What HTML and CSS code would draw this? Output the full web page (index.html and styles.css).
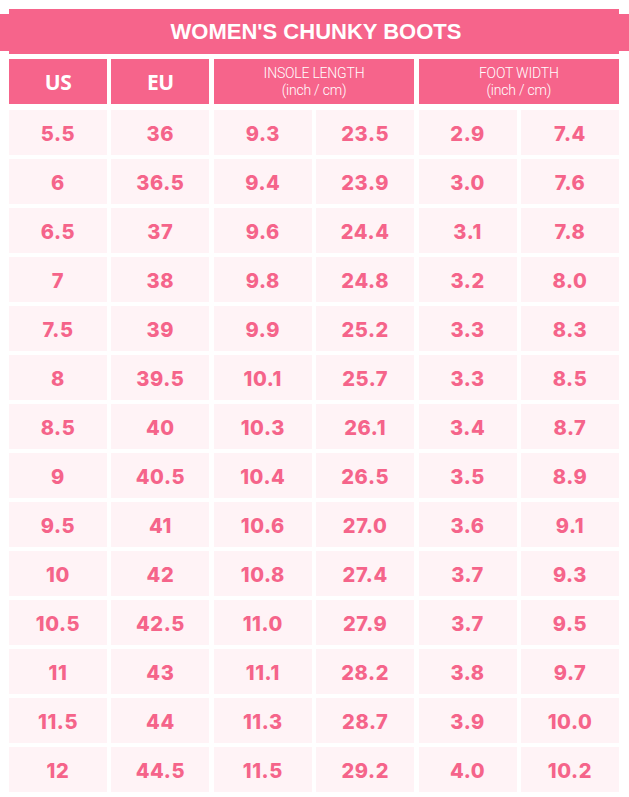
FILE: index.html
```html
<!DOCTYPE html>
<html>
<head>
<meta charset="utf-8">
<link rel="stylesheet" href="styles.css">
</head>
<body>
<div class="page">
  <div class="title-band">
    <div class="title">WOMEN'S CHUNKY BOOTS</div>
  </div>
  <div class="grid header-grid">
    <div class="head big">US</div>
    <div class="head big">EU</div>
    <div class="head small span2">INSOLE LENGTH<br>(inch / cm)</div>
    <div class="head small span2">FOOT WIDTH<br>(inch / cm)</div>
  </div>
  <div class="grid body-grid">
    <div class="cell">5.5</div><div class="cell">36</div><div class="cell">9.3</div><div class="cell">23.5</div><div class="cell">2.9</div><div class="cell">7.4</div>
    <div class="cell">6</div><div class="cell">36.5</div><div class="cell">9.4</div><div class="cell">23.9</div><div class="cell">3.0</div><div class="cell">7.6</div>
    <div class="cell">6.5</div><div class="cell">37</div><div class="cell">9.6</div><div class="cell">24.4</div><div class="cell">3.1</div><div class="cell">7.8</div>
    <div class="cell">7</div><div class="cell">38</div><div class="cell">9.8</div><div class="cell">24.8</div><div class="cell">3.2</div><div class="cell">8.0</div>
    <div class="cell">7.5</div><div class="cell">39</div><div class="cell">9.9</div><div class="cell">25.2</div><div class="cell">3.3</div><div class="cell">8.3</div>
    <div class="cell">8</div><div class="cell">39.5</div><div class="cell">10.1</div><div class="cell">25.7</div><div class="cell">3.3</div><div class="cell">8.5</div>
    <div class="cell">8.5</div><div class="cell">40</div><div class="cell">10.3</div><div class="cell">26.1</div><div class="cell">3.4</div><div class="cell">8.7</div>
    <div class="cell">9</div><div class="cell">40.5</div><div class="cell">10.4</div><div class="cell">26.5</div><div class="cell">3.5</div><div class="cell">8.9</div>
    <div class="cell">9.5</div><div class="cell">41</div><div class="cell">10.6</div><div class="cell">27.0</div><div class="cell">3.6</div><div class="cell">9.1</div>
    <div class="cell">10</div><div class="cell">42</div><div class="cell">10.8</div><div class="cell">27.4</div><div class="cell">3.7</div><div class="cell">9.3</div>
    <div class="cell">10.5</div><div class="cell">42.5</div><div class="cell">11.0</div><div class="cell">27.9</div><div class="cell">3.7</div><div class="cell">9.5</div>
    <div class="cell">11</div><div class="cell">43</div><div class="cell">11.1</div><div class="cell">28.2</div><div class="cell">3.8</div><div class="cell">9.7</div>
    <div class="cell">11.5</div><div class="cell">44</div><div class="cell">11.3</div><div class="cell">28.7</div><div class="cell">3.9</div><div class="cell">10.0</div>
    <div class="cell">12</div><div class="cell">44.5</div><div class="cell">11.5</div><div class="cell">29.2</div><div class="cell">4.0</div><div class="cell">10.2</div>
  </div>
</div>
</body>
</html>
```
FILE: styles.css
```css
html, body {
  margin: 0;
  padding: 0;
  background: #ffffff;
}
.page {
  width: 629px;
  padding-top: 9px;
}
.title-band {
  background: linear-gradient(to bottom, transparent 0, transparent 5px, #f6648b 5px, #f6648b 42px, transparent 42px);
  padding: 0 10px 0 9px;
}
.title {
  background: #f6648b;
  height: 45px;
  display: flex;
  align-items: center;
  justify-content: center;
  color: #ffffff;
  font-family: "Liberation Sans", Arial, sans-serif;
  font-weight: bold;
  font-size: 22px;
  padding-left: 4px;
}
.grid {
  margin: 0 10px 0 9px;
  display: grid;
  grid-template-columns: repeat(6, 1fr);
  grid-auto-rows: 45px;
  column-gap: 4.4px;
  row-gap: 4px;
}
.header-grid {
  margin-top: 5px;
  margin-bottom: 6px;
}
.head {
  background: #f6648b;
  color: #ffffff;
  display: flex;
  align-items: center;
  justify-content: center;
  text-align: center;
}
.span2 {
  grid-column: span 2;
}
.big {
  font-family: "Open Sans", sans-serif;
  font-weight: 700;
  font-size: 21px;
  letter-spacing: -0.5px;
}
.small {
  font-family: Roboto, sans-serif;
  font-weight: 300;
  font-size: 14px;
  line-height: 17px;
  letter-spacing: -0.2px;
}
.cell {
  background: #fff3f6;
  color: #f5648a;
  display: flex;
  align-items: center;
  justify-content: center;
  font-family: Inter, sans-serif;
  font-weight: 800;
  font-size: 20px;
  letter-spacing: 0.6px;
  padding-top: 2px;
}
```
